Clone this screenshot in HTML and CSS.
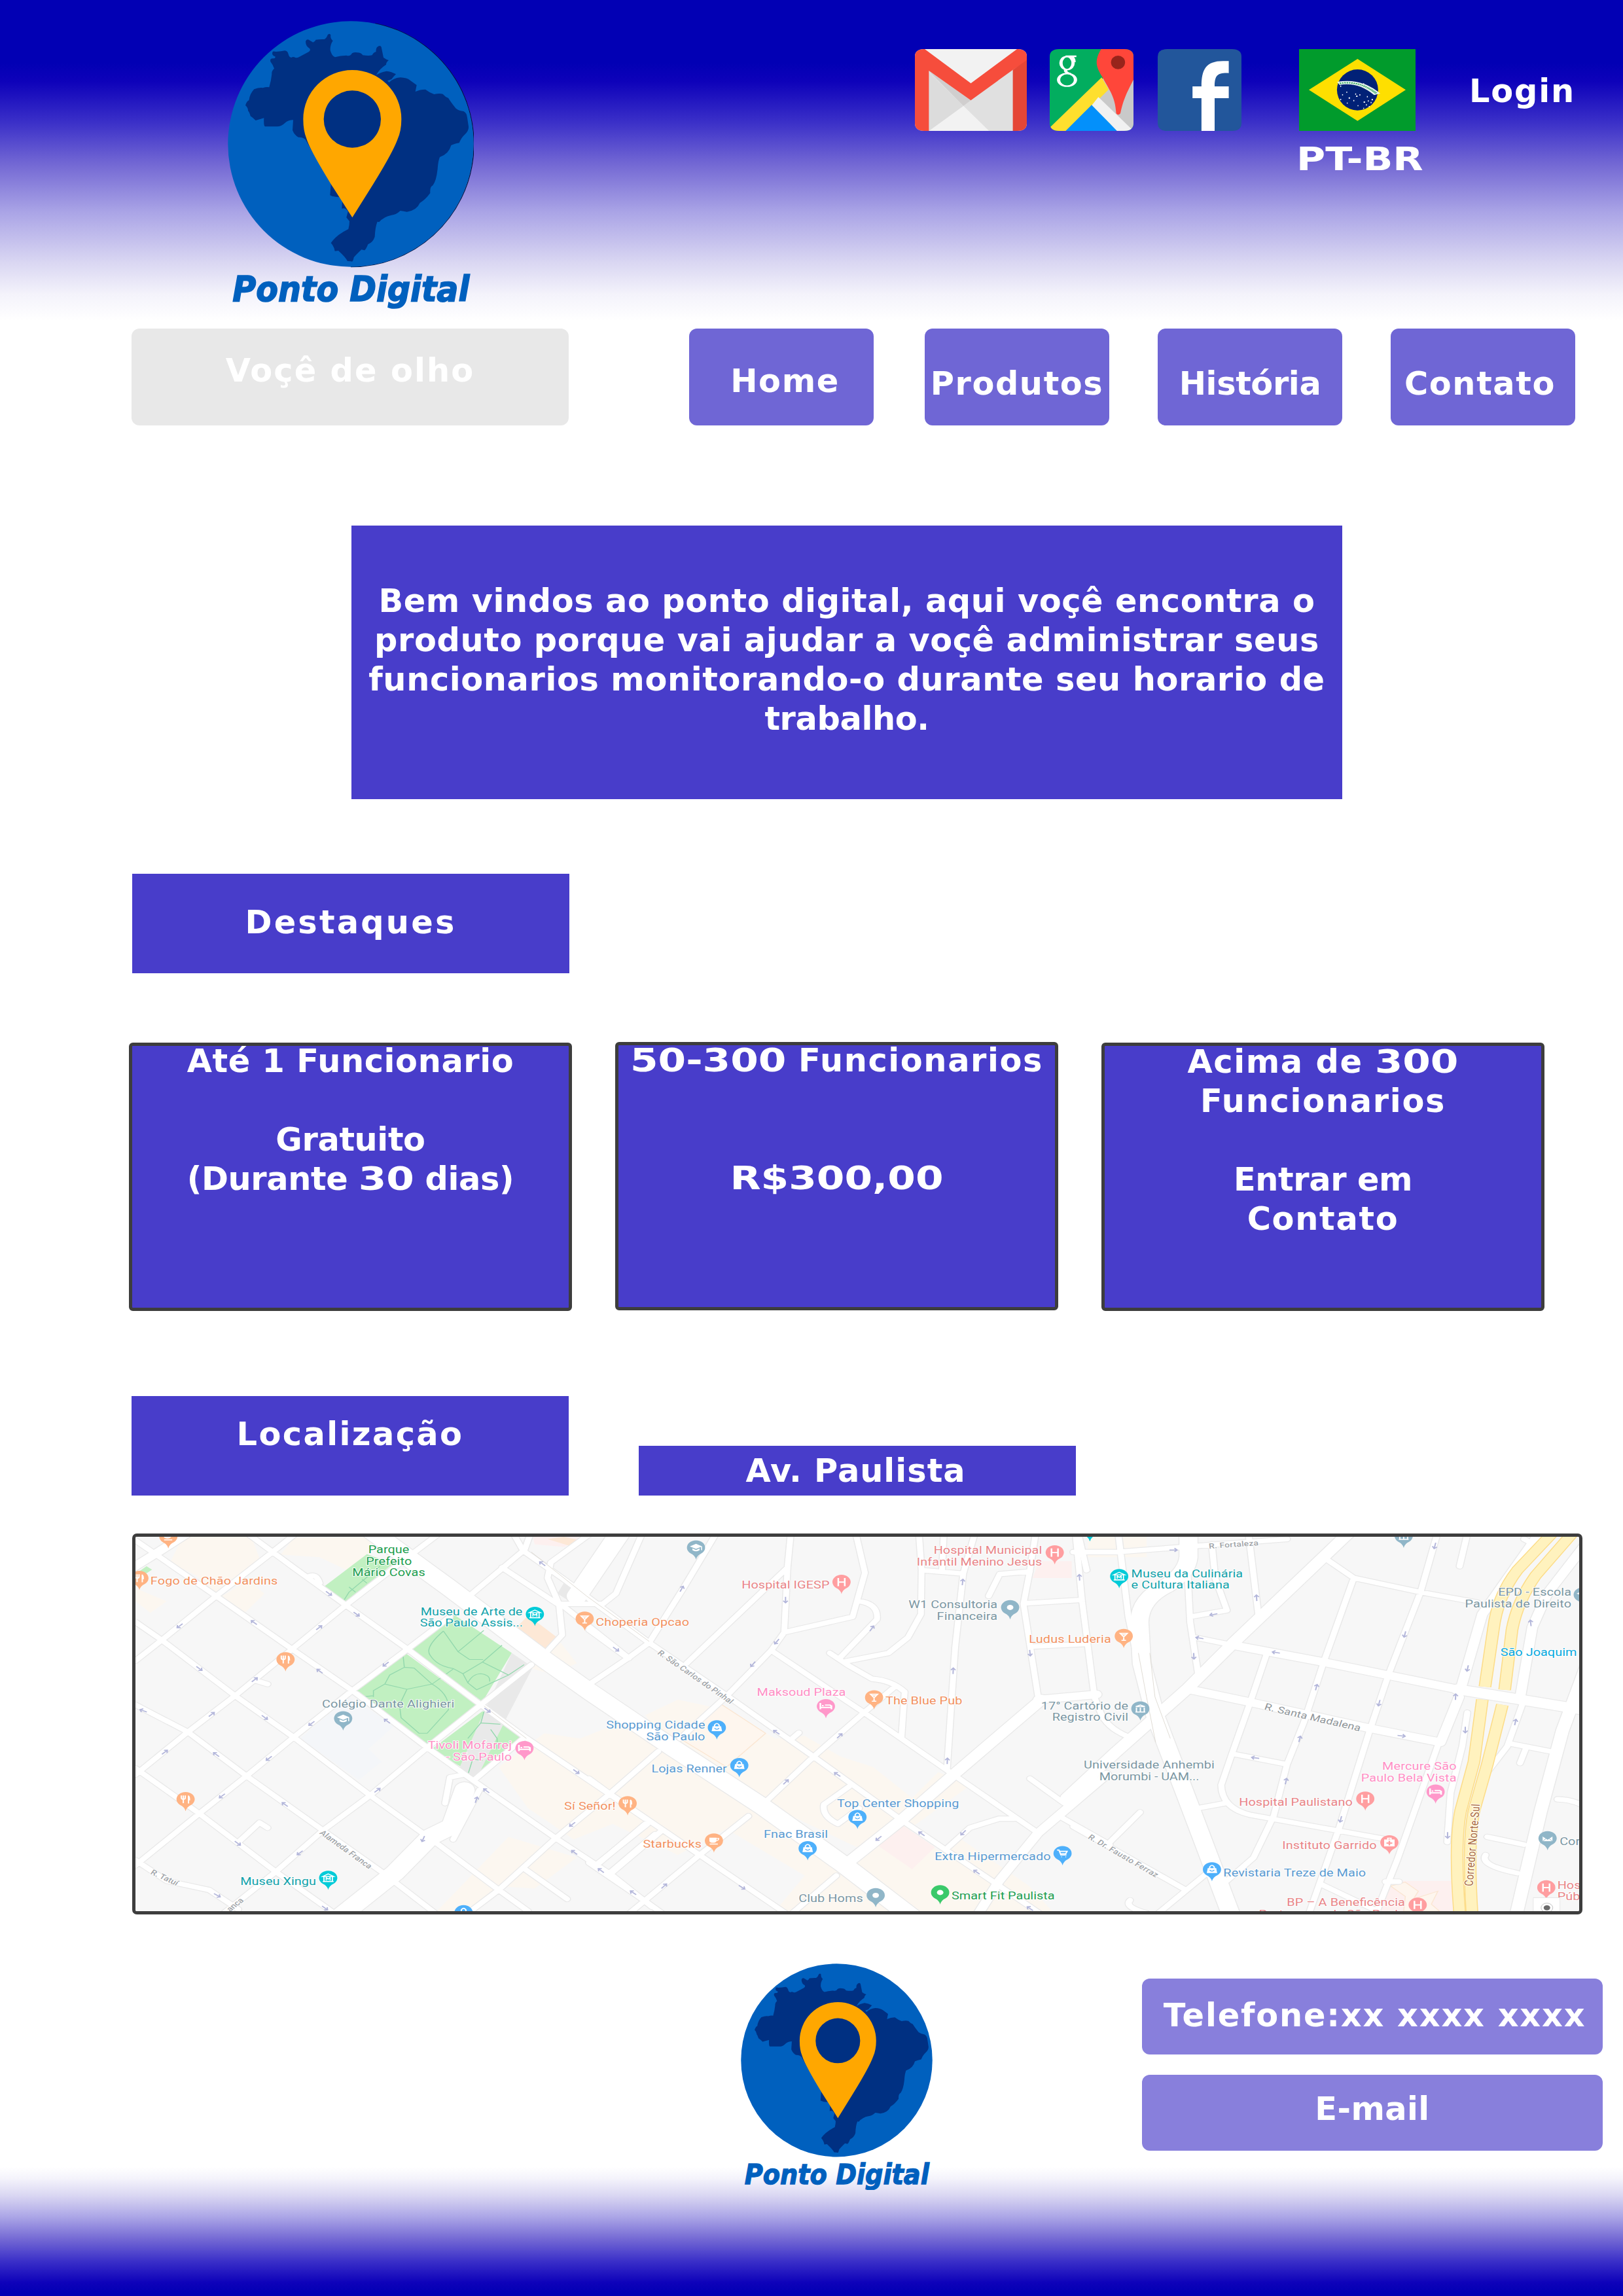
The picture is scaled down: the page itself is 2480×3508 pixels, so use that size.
FILE: index.html
```html
<!DOCTYPE html>
<html lang="pt-BR">
<head>
<meta charset="utf-8">
<title>Ponto Digital</title>
<link rel="stylesheet" href="styles.css">
</head>
<body>
<header class="top">
  <svg class="logo" viewBox="84 96 1128 1320" role="img" aria-label="Ponto Digital">
    <defs>
      <g id="emblem">
        <circle cx="648" cy="660" r="563" fill="#0060be"/>
        <path fill="#003082" d="M289 240Q290 233 305 237Q330 236 346 232Q358 233 362 248Q365 262 376 264Q383 258 394 264Q402 266 410 262L455 238Q466 230 459 222Q441 212 441 190Q445 178 455 182L475 194Q483 192 488 182Q510 179 527 180Q538 174 542 160Q550 150 556 160Q553 175 566 187Q553 205 554 230Q562 258 576 262Q600 255 628 254Q645 260 654 244Q665 238 678 241Q695 241 703 253Q730 257 746 253Q752 240 764 237Q762 225 768 217Q782 204 788 215L798 264Q810 273 822 276Q810 285 810 296Q780 315 764 344Q785 330 812 326Q835 328 855 340Q845 350 835 363Q826 367 816 370L824 378Q842 358 875 355Q905 356 920 368L950 390L944 420Q965 410 990 410Q1010 425 1030 432Q1055 426 1070 431Q1082 445 1095 449Q1108 470 1130 497Q1145 508 1165 510Q1180 517 1182 540L1188 580Q1190 600 1170 617Q1155 630 1145 655Q1120 660 1108 666Q1098 705 1056 720Q1048 740 1046 775Q1040 830 1024 850Q1010 855 1012 885Q990 915 965 930Q950 965 905 971Q890 968 875 966Q855 985 835 986Q800 992 778 1018L770 1016Q760 1040 758 1085Q750 1110 727 1120Q715 1150 709 1147L697 1144Q670 1170 662 1180Q658 1203 650 1198Q640 1196 633 1197Q625 1180 591 1149L575 1151Q572 1130 557 1114Q580 1078 637 1050Q642 1030 642 1014L628 997L635 970Q625 950 607 956L609 920L595 904Q570 904 553 895L557 842L440 640Q430 628 408 629Q390 620 381 597L384 550Q360 550 345 565Q330 580 310 580H255Q248 578 250 541L212 552Q200 540 188 532Q184 515 177 508Q178 495 165 483Q170 465 181 460Q185 430 205 409Q230 400 245 403Q262 397 274 400Q283 370 286 340Q284 325 297 314Q290 295 280 283Q276 268 290 268Q305 268 301 259Q285 253 289 240Z"/>
        <path fill="#ffa700" fill-rule="evenodd" d="M655 997L556 842Q460 685 445 635Q430 600 430 546A225 225 0 0 1 880 546Q880 600 862 640Q840 700 750 845ZM655 415A131 131 0 1 0 655 677A131 131 0 1 0 655 415Z"/>
        <text class="wordmark" x="106" y="1380" textLength="1086" lengthAdjust="spacingAndGlyphs">Ponto Digital</text>
      </g>
    </defs>
    <path d="M760 108A563 563 0 0 1 648 1223" fill="none" stroke="#04123c" stroke-width="4"/>
    <use href="#emblem"/>
  </svg>

  <nav class="social">
    <svg class="mail" viewBox="53 105 240 375" preserveAspectRatio="none" aria-label="Gmail">
      <defs><clipPath id="cm"><path d="M53 140Q53 105 73 105H273Q293 105 293 140V445Q293 480 273 480H73Q53 480 53 445Z"/></clipPath></defs>
      <g clip-path="url(#cm)">
        <path fill="#e0e0e0" d="M53 105H293V480H53Z"/>
        <path fill="#f2f2f2" d="M70 105H276L173 262ZM157 365L212 480H83Z"/>
        <path fill="#d0cece" d="M83 205L173 340L157 365Z"/>
        <path fill="#dcdcdc" d="M83 215L157 365L83 480Z"/>
        <path fill="#f64d3c" d="M53 105H74L173 262L272 105H293V160L263 200L173 340L83 204V480H53Z"/>
        <path fill="#e54636" d="M293 155V480H263V200Z"/>
      </g>
    </svg>
    <svg class="tile" viewBox="342 105 179 375" preserveAspectRatio="none" aria-label="Google Maps">
      <defs><clipPath id="cg"><path d="M342 140Q342 105 362 105H501Q521 105 521 140V445Q521 480 501 480H362Q342 480 342 445Z"/></clipPath></defs>
      <g clip-path="url(#cg)">
        <path fill="#02ad5f" d="M342 105H521V480H342Z"/>
        <path fill="#c9c9c9" d="M455 240L521 200V480H480L440 320Z"/>
        <path fill="#fedf2e" d="M453 235L468 290L378 480H342V465Z"/>
        <path fill="#0390fb" d="M432 360L486 480H376Z"/>
        <path fill="#f1f1f1" d="M446 325L520 478L486 480L432 362Z"/>
        <path fill="#ff463a" d="M452 105H521V245C508 300 500 330 493 400Q488 412 484 400C482 320 468 290 455 235C442 190 436 160 452 105Z"/>
        <ellipse cx="488" cy="166" rx="15" ry="31" fill="#98241b"/>
        <g fill="none" stroke="#fff" stroke-width="7"><ellipse cx="379" cy="169" rx="13" ry="30"/><ellipse cx="379" cy="246" rx="18" ry="29"/><path d="M376 138H399M376 199Q374 212 386 218M390 142Q394 150 394 165"/></g>
      </g>
    </svg>
    <svg class="tile" viewBox="573 105 178 375" preserveAspectRatio="none" aria-label="Facebook">
      <path fill="#22569b" d="M573 140Q573 105 593 105H731Q751 105 751 140V445Q751 480 731 480H593Q573 480 573 445Z"/>
      <path fill="#fff" d="M666 480V330H647V276H666C666 200 675 160 712 160H724V215C700 213 694 225 694 276H724V330H694V480Z"/>
    </svg>
  </nav>

  <div class="lang">
    <svg class="flag" viewBox="875 105 249 375" preserveAspectRatio="none" aria-label="Brasil">
      <path fill="#019b2c" d="M875 105H1124V480H875Z"/>
      <path fill="#fedf00" d="M1000 150L1103 292L1000 434L896 292Z"/>
      <ellipse cx="1000" cy="292" rx="44" ry="94" fill="#012177"/>
      <path d="M959 262Q1005 245 1042 312" fill="none" stroke="#e9f5ef" stroke-width="15"/>
      <path d="M962 262Q1005 248 1040 308" fill="none" stroke="#2fa35b" stroke-width="6" stroke-dasharray="3 2"/>
      <g fill="#fff"><path d="M1012 262h2v5h-2zM963 272h2v6h-2zM976 300h2v5h-2zM967 312h2v5h-2zM963 333h2v6h-2zM981 326h3v6h-3zM977 350h2v5h-2zM991 338h2v6h-2zM995 308h2v6h-2zM997 318h3v6h-3zM1004 312h2v6h-2zM1000 362h2v5h-2zM1013 345h3v6h-3zM1020 320h2v6h-2zM1022 340h2v6h-2zM1030 334h3v6h-3zM1028 347h2v6h-2zM1018 358h2v6h-2zM1012 374h2v5h-2zM1024 366h2v5h-2z"/></g>
    </svg>
    <span class="lang-code">PT-BR</span>
  </div>
  <a class="login">Login</a>
</header>

<nav class="menu">
  <div class="search">Voçê de olho</div>
  <a class="tab tab-home">Home</a>
  <a class="tab">Produtos</a>
  <a class="tab tight">História</a>
  <a class="tab tab-contact">Contato</a>
</nav>

<section class="hero">
  <p>Bem vindos ao ponto digital, aqui voçê encontra o<br>produto porque vai ajudar a voçê administrar seus<br>funcionarios monitorando-o durante seu horario de<br><span class="tight">trabalho.</span></p>
</section>

<h2 class="label label-highlights">Destaques</h2>

<section class="plans">
  <article class="plan"><p>Até 1 Funcionario</p><p class="gap tight">Gratuito</p><p class="tight">(Durante <span class="num num-2">30</span> dias)</p></article>
  <article class="plan plan-mid"><p><span class="num num-6">50-300</span> Funcionarios</p><p class="gap2"><span class="num">R$300,00</span></p></article>
  <article class="plan plan-last"><p>Acima de <span class="num num-3">300</span></p><p class="loose">Funcionarios</p><p class="gap tight">Entrar em</p><p class="loose">Contato</p></article>
</section>

<section class="place">
  <h2 class="label label-place">Localização</h2>
  <div class="address">Av. Paulista</div>
</section>

<svg class="map" viewBox="34 71 4435 1446" preserveAspectRatio="none" role="img" aria-label="Mapa da Av. Paulista">
  <defs>
    <path id="p" d="M0 46Q-3 30 -17 22A28 28 0 1 1 17 22Q3 30 0 46Z"/>
    <path id="fork" fill="none" stroke="#fff" stroke-width="4" d="M-13 -15V-6Q-13 0 -7 0Q-1 0 -1 -6V-15M-7 -15V15M9 -14V16M8 -13Q12 -12 12 2H9" />
    <path id="hosp" fill="none" stroke="#fff" stroke-width="5" d="M-10 -16V16M10 -16V16M-10 0H10"/>
    <path id="bed" fill="none" stroke="#fff" stroke-width="5" d="M-17 -13V11M17 -4V11M-17 4H17M-3 -5H13L17 0M-12 -3H-7"/>
    <g id="bag"><path fill="#fff" d="M-16 14L-13 -5H13L16 14Z"/><path d="M-7 -4V-10Q0 -22 7 -10V-4" fill="none" stroke="#fff" stroke-width="4"/><path d="M-7 2Q0 11 7 2" fill="none" stroke="#4aa8f5" stroke-width="3"/></g>
    <path id="mus" fill="none" stroke="#fff" stroke-width="3.5" d="M-17 -6L0 -16L17 -6ZM-13 -5V13H13V-5M-17 14H17M-6 9V-2L0 4L6 -2V9"/>
    <g id="cup"><path fill="#fff" d="M-14 -12H8V0Q7 8 -3 8Q-13 8 -14 0ZM-13 11H12V15H-13Z"/><path d="M8 -9H15Q15 -1 7 0" fill="none" stroke="#fff" stroke-width="3"/></g>
    <path id="glass" fill="none" stroke="#fff" stroke-width="4" d="M-11 -13H11L0 1ZM0 0V13M-7 14H7M-7 -8H7"/>
    <g id="cap"><path fill="#fff" d="M0 -15L19 -5L0 5L-19 -5ZM-11 3L0 9L11 3V10Q0 18 -11 10Z"/><path d="M17 -4V10" stroke="#fff" stroke-width="3"/></g>
    <circle id="dot" r="10" fill="#fff"/>
    <path id="cart" fill="none" stroke="#fff" stroke-width="4" d="M-17 -13H-11L-5 6H12M-9 -8H14L10 1H-6M-4 13h2M9 13h2"/>
    <path id="bank" fill="none" stroke="#fff" stroke-width="4" d="M-14 -8L0 -14L14 -8ZM-12 -4V12M0 -4V12M12 -4V12M-15 13H15"/>
    <path id="arrow" fill="none" stroke="#b3b6da" stroke-width="4" d="M-12 0H10M3 -7L11 0L3 7"/>

    <g id="r-a">
      <path d="M34 85L282 300L515 505L700 665L930 885L1080 1020L1325 1235L1500 1380L1620 1500M34 400L115 470L340 685L520 845L755 1070L965 1260L1150 1435L1240 1517M34 720L195 825L375 995L610 1205L790 1365L960 1530M34 965L230 1140L465 1365L650 1530M380 60L520 190L680 335L870 505L1095 720L1225 840L1490 1065L1600 1160M34 550L115 470L282 300L455 130L525 60M34 990L195 825L340 685L515 505L680 335L860 160L965 60M34 1340L230 1140L375 995L520 845L700 665L870 505L1000 380M300 1530L465 1365L610 1205L755 1070L930 885L1095 720L1250 565M1075 1010L1225 850M1050 1530L1150 1435L1325 1235L1490 1065L1640 900M1050 310L1230 120L1247 60M1290 525L1345 450L1335 330L1300 230L1310 170L1430 60M1200 70L1225 125L1350 235L1612 480M1350 340L1550 540M1160 190L1330 330L1470 330L1510 290L1590 60M34 1320L130 1400L260 1435L350 1510M355 1245L415 1175L440 1195M565 225Q590 210 600 250M400 625L440 640M985 1100L1000 1000L1040 990M1090 1050L1010 1240M1225 1350L1360 1470M1450 1340L1600 1180M1490 1370L1630 1220"/>
      <path class="w30" d="M20 195L110 125L190 60"/>
      <path class="w70" d="M640 1560L830 1370L940 1230L1005 1190L1045 1050"/>
      <path class="w70" d="M1390 300L1520 60"/>
    </g>
    <path id="r-main" class="w70" d="M760 50L1000 270L1290 545L1430 670L1677 880L1957 1110L2207 1335L2420 1540"/>
    <g id="r-b">
      <path d="M0 310L185 480L430 690L690 920L960 1165L1250 1410L1390 1530M0 430L120 540M560 510L845 750L1120 990L1380 1215M0 1005L60 1060L340 1300L610 1530M0 1330L175 1480L230 1530M-10 650L120 540L185 480L290 270L390 60M280 850L420 690L560 510L600 440L610 190L620 60M300 560L610 190M600 440L810 380L848 210L820 60M830 320Q890 330 885 390L770 540M740 520L800 570L870 620Q930 625 970 670L960 850M790 552L920 520L980 460L1020 370L1022 200L1014 60M1022 200L1150 213M1090 60L1085 200M1185 60L1150 213L1125 500L1100 970M530 1110L690 920L845 750L940 650M620 1530L760 1380M120 1530L340 1300L490 1150M20 1340L180 1180M65 1375L220 1210M1372 60L1355 200L1335 330L1380 690M1355 205L1262 215L1228 300M1340 328L1510 315M1360 495L1530 485M1495 60L1515 320L1552 680M800 1035L722 1105Q715 1150 765 1180L830 1120M1095 1280L1170 1195L1260 1160H1305M1355 1005L1460 1100M1445 1150L1600 1260M620 855L645 828"/>
      <path class="w42" d="M780 1345L960 1165L1120 990L1390 700"/>
      <path class="w30" d="M1380 700L1560 680M1190 1540L1260 1400L1380 1215L1590 990"/>
    </g>
    <g id="r-c">
      <path d="M0 130H130L640 80M135 60L165 380L185 500M15 60L40 200M340 150L350 400L375 610M415 100L425 230L460 355L350 380M525 60L555 380M365 460L480 490M755 155L840 230L1040 285L1210 325M1090 60L1040 285L945 600L885 830L795 1200L705 1530M840 230L750 555L690 790L640 950L600 1150L540 1310L460 1400M580 520L530 710L475 910L443 1030Q445 1120 530 1145L940 1240M480 910L640 950M370 1120L455 1100M1095 865L970 1320L905 1530M1180 750L1165 880L1130 1060L1120 1250M1350 700L1300 880L1240 980M1310 870L1430 900M1355 890L1338 945M1240 1230L1350 1260M1235 1300Q1215 1340 1330 1370M1450 1085Q1490 1085 1530 1110M200 1135L110 1250M0 1190L330 1430M410 1360L250 1530M170 1475Q150 1500 220 1525M745 1415L900 1510M935 1403H975M1350 80L1380 100M1180 60L1157 185M-10 690L60 680L85 760Q110 820 180 850"/>
      <path class="w30" d="M480 490L750 555L940 605L1150 660M345 660L530 710L885 810L1100 865L1155 690M1395 60L1225 370L1160 660M1540 90L1420 290L1375 420L1340 680"/>
      <path class="w42" d="M830 50L480 480L340 660L130 900L-20 1080M1150 660L1530 740M1540 560L1465 820L1400 1130L1325 1540"/>
      <path class="w55" d="M345 50V150Q340 210 280 260Q200 310 198 400L205 560L245 760L340 1080L475 1540"/>
    </g>
  </defs>

  <path fill="#f7f7f7" d="M24 60H4479V1527H24Z"/>
  <g class="block">
    <path d="M180 71H390L420 170L280 290L220 220L140 170ZM520 75L790 71L700 210L600 150L480 140ZM300 300L380 240L430 290L370 365ZM34 270L130 320L80 365L34 320Z"/>
    <path d="M1400 850L1520 790L1950 1110L2200 1330L2400 1530H1990L2090 1380L1850 1200L1700 1300L1500 1180L1380 1240L1300 1170L1240 1120L1150 960L1290 830ZM1180 1230L1390 1310L1260 1430L1150 1420L1060 1517H960L1050 1400Z"/>
    <path d="M1600 760L1700 700L1850 740L2000 850L2090 840L2200 920L2300 960L2420 1080L2500 980L2600 1030L2400 1210L2300 1300L1950 1090L1660 870ZM2230 1330L2380 1180L2520 1300L2560 1230L2780 1420L2850 1517H2440ZM1250 580L1310 600L1390 560L1340 480ZM2960 71H3140V150H2960Z"/>
  </g>
  <path fill="#f4f6f9" d="M540 850L690 690L830 800L750 890L790 940L720 1010Z"/>
  <path fill="#fdf0ef" d="M2810 165H2910V230H2790ZM1255 71H1420L1350 110L1260 100ZM2390 1185L2490 1270L2420 1355L2310 1260ZM3880 1430L3920 1400H4080V1517H3850Z"/>
  <path class="outline" d="M3890 1420L3935 1405L3975 1440L3960 1470L4035 1440L4015 1490L4040 1517H3930L3935 1460Z"/>
  <path fill="#fde8d6" d="M1190 440L1240 375L1330 460L1290 515ZM1300 80L1350 71L1400 85L1365 105Z"/>
  <path class="outline" d="M1700 845L1830 715L1970 830L1850 960Z"/>
  <g fill="#c1f0c1">
    <path d="M615 262L745 138L825 175L680 322ZM875 500L1010 370L1190 520L1100 708ZM705 670L858 515L1082 722L930 880ZM940 895L1100 745L1220 840L1080 990ZM45 205L68 185L85 198L60 218Z"/>
  </g>
  <path fill="#e9e9e9" d="M1190 520L1255 575L1170 780L1080 1010L1020 990L1100 760ZM1330 290L1350 250L1420 310L1380 330Z"/>
  <g fill="none" stroke="#93d8ad" stroke-width="3">
    <path d="M980 435L1025 515L1060 545L1102 545M1025 515L1104 433M980 435Q920 500 940 530Q960 570 1010 580L1040 600L1100 555L1160 490M1100 555L1180 605L1228 565M1180 605L1082 662L1055 635Q1070 600 1095 600Q1125 605 1122 630M1055 635L1040 600M855 518L860 575L815 605L800 640L868 660L945 640L1010 582M860 575L890 578L945 640Q1000 680 995 740L930 830H905L850 770L845 720L868 660M800 640L765 665V690M725 690L765 685M1105 745L1095 790L1155 795M1095 790L1075 820L1055 850M1125 815L1145 850V890M1055 990L1070 930L1100 935M675 315L690 285L785 185M690 265L710 285M730 235L745 250"/>
  </g>

  <g class="casing"><use href="#r-a"/><use href="#r-main"/><use href="#r-b" x="1427"/><use href="#r-c" transform="translate(2915 0) scale(1.0257 1)"/></g>
  <g class="road"><use href="#r-a"/><use href="#r-main"/><use href="#r-b" x="1427"/><use href="#r-c" transform="translate(2915 0) scale(1.0257 1)"/></g>
  <path d="M1250 130L1420 300L1612 475M1105 725L1235 850" fill="none" stroke="#dcd8d0" stroke-width="2"/>
  <path d="M3115 520L3140 690L3168 865M3150 520L3166 690L3213 850" fill="none" stroke="#dcd8d0" stroke-width="2"/>

  <g transform="translate(2915 0) scale(1.0257 1)">
    <g fill="none" stroke="#fcdc88" stroke-width="38"><path d="M1440 50L1330 200Q1270 300 1258 430L1233 650M1225 700L1200 940L1160 1130Q1140 1260 1158 1540"/><path d="M1500 50L1385 220Q1330 320 1314 430L1292 662M1285 720L1240 950L1200 1130Q1180 1260 1195 1540"/></g>
    <g fill="none" stroke="#fff2be" stroke-width="32"><path d="M1440 50L1330 200Q1270 300 1258 430L1233 650M1225 700L1200 940L1160 1130Q1140 1260 1158 1540"/><path d="M1500 50L1385 220Q1330 320 1314 430L1292 662M1285 720L1240 950L1200 1130Q1180 1260 1195 1540"/></g>
  </g>

  <g>
    <use href="#arrow" transform="translate(170 415) rotate(137)"/><use href="#arrow" transform="translate(398 402) rotate(222)"/><use href="#arrow" transform="translate(598 422) rotate(-43)"/><use href="#arrow" transform="translate(628 290) rotate(42)"/><use href="#arrow" transform="translate(713 370) rotate(42)"/><use href="#arrow" transform="translate(230 580) rotate(42)"/><use href="#arrow" transform="translate(400 623) rotate(-43)"/><use href="#arrow" transform="translate(600 590) rotate(222)"/><use href="#arrow" transform="translate(803 563) rotate(137)"/><use href="#arrow" transform="translate(58 743) rotate(205)"/><use href="#arrow" transform="translate(268 757) rotate(-43)"/><use href="#arrow" transform="translate(431 769) rotate(42)"/><use href="#arrow" transform="translate(575 792) rotate(137)"/><use href="#arrow" transform="translate(807 783) rotate(222)"/><use href="#arrow" transform="translate(124 903) rotate(-43)"/><use href="#arrow" transform="translate(282 912) rotate(222)"/><use href="#arrow" transform="translate(444 927) rotate(137)"/><use href="#arrow" transform="translate(300 1072) rotate(137)"/><use href="#arrow" transform="translate(493 1105) rotate(222)"/><use href="#arrow" transform="translate(777 1050) rotate(-43)"/><use href="#arrow" transform="translate(348 1255) rotate(42)"/><use href="#arrow" transform="translate(539 1292) rotate(137)"/><use href="#arrow" transform="translate(918 1238) rotate(110)"/><use href="#arrow" transform="translate(1081 1087) rotate(-75)"/><use href="#arrow" transform="translate(1112 1052) rotate(222)"/><use href="#arrow" transform="translate(1115 741) rotate(42)"/><use href="#arrow" transform="translate(1284 175) rotate(222)"/><use href="#arrow" transform="translate(1388 978) rotate(42)"/><use href="#arrow" transform="translate(1376 1182) rotate(137)"/><use href="#arrow" transform="translate(1382 1290) rotate(222)"/><use href="#arrow" transform="translate(1464 1360) rotate(222)"/><use href="#arrow" transform="translate(1510 505) rotate(42)"/><use href="#arrow" transform="translate(285 1456) rotate(35)"/><use href="#arrow" transform="translate(616 1505) rotate(42)"/>
    <g transform="translate(1427 0)"><use href="#arrow" transform="translate(285 272) rotate(-65)"/><use href="#arrow" transform="translate(604 315) rotate(90)"/><use href="#arrow" transform="translate(577 476) rotate(125)"/><use href="#arrow" transform="translate(504 563) rotate(125)"/><use href="#arrow" transform="translate(869 425) rotate(-60)"/><use href="#arrow" transform="translate(1148 246) rotate(-85)"/><use href="#arrow" transform="translate(1119 589) rotate(-88)"/><use href="#arrow" transform="translate(1101 937) rotate(-88)"/><use href="#arrow" transform="translate(1355 520) rotate(85)"/><use href="#arrow" transform="translate(1507 228) rotate(-93)"/><use href="#arrow" transform="translate(576 826) rotate(220)"/><use href="#arrow" transform="translate(770 840) rotate(-50)"/><use href="#arrow" transform="translate(763 989) rotate(220)"/><use href="#arrow" transform="translate(605 1018) rotate(-50)"/><use href="#arrow" transform="translate(890 1236) rotate(135)"/><use href="#arrow" transform="translate(1022 1218) rotate(220)"/><use href="#arrow" transform="translate(1150 1214) rotate(130)"/><use href="#arrow" transform="translate(1191 1366) rotate(220)"/><use href="#arrow" transform="translate(231 1420) rotate(-48)"/><use href="#arrow" transform="translate(136 1446) rotate(220)"/><use href="#arrow" transform="translate(470 1425) rotate(38)"/><use href="#arrow" transform="translate(1355 1507) rotate(220)"/></g>
    <g transform="translate(2915 0) scale(1.0257 1)"><use href="#arrow" transform="translate(300 122)"/><use href="#arrow" transform="translate(549 307) rotate(-93)"/><use href="#arrow" transform="translate(420 371) rotate(165)"/><use href="#arrow" transform="translate(378 462) rotate(192)"/><use href="#arrow" transform="translate(607 518) rotate(192)"/><use href="#arrow" transform="translate(361 532) rotate(88)"/><use href="#arrow" transform="translate(1083 106) rotate(102)"/><use href="#arrow" transform="translate(993 448) rotate(102)"/><use href="#arrow" transform="translate(728 652) rotate(-78)"/><use href="#arrow" transform="translate(916 713) rotate(102)"/><use href="#arrow" transform="translate(678 852) rotate(-78)"/><use href="#arrow" transform="translate(983 840) rotate(8)"/><use href="#arrow" transform="translate(545 925) rotate(190)"/><use href="#arrow" transform="translate(637 1015) rotate(-80)"/><use href="#arrow" transform="translate(801 1162) rotate(102)"/><use href="#arrow" transform="translate(1121 1224) rotate(90)"/><use href="#arrow" transform="translate(1174 817) rotate(90)"/><use href="#arrow" transform="translate(1145 689) rotate(-88)"/><use href="#arrow" transform="translate(1181 579) rotate(100)"/><use href="#arrow" transform="translate(1370 404) rotate(-95)"/><use href="#arrow" transform="translate(1324 787) rotate(-80)"/></g>
  </g>

  <g fill="#ffb383"><use href="#p" x="135" y="70"/><use href="#p" x="46" y="231"/><use href="#p" x="495" y="545"/><use href="#p" x="188" y="1085"/><use href="#p" x="1414" y="388"/><use href="#p" x="1546" y="1101"/><use href="#p" x="2303" y="692"/><use href="#p" x="1811" y="1245"/><use href="#p" x="3070" y="455"/></g>
  <g fill="#00cbd8"><use href="#p" x="1261" y="370"/><use href="#p" x="626" y="1389"/><use href="#p" x="3056" y="224"/><use href="#p" x="2966" y="43"/></g>
  <g fill="#90b6c8"><use href="#p" x="672" y="773"/><use href="#p" x="1756" y="113"/><use href="#p" x="2721" y="344"/><use href="#p" x="2308" y="1456"/><use href="#p" x="3121" y="735"/><use href="#p" x="3930" y="68"/><use href="#p" x="4480" y="295"/><use href="#p" x="4372" y="1236"/></g>
  <g fill="#ff98ca"><use href="#p" x="1229" y="888"/><use href="#p" x="2155" y="726"/><use href="#p" x="4028" y="1056"/></g>
  <g fill="#4eb0fb"><use href="#p" x="1820" y="808"/><use href="#p" x="1889" y="954"/><use href="#p" x="2252" y="1154"/><use href="#p" x="2099" y="1275"/><use href="#p" x="2882" y="1294"/><use href="#p" x="3341" y="1356"/><use href="#p" x="1042" y="1522"/></g>
  <g fill="#ff9ea0"><use href="#p" x="2203" y="246"/><use href="#p" x="2858" y="132"/><use href="#p" x="3812" y="1083"/><use href="#p" x="3886" y="1252"/><use href="#p" x="3973" y="1493"/><use href="#p" x="4368" y="1426"/></g>
  <use href="#p" x="2506" y="1445" fill="#3ac96a"/>
  <use href="#cup" x="135" y="70"/><use href="#fork" x="46" y="231"/><use href="#fork" x="495" y="545"/><use href="#fork" x="188" y="1085"/><use href="#fork" x="1546" y="1101"/><use href="#glass" x="1414" y="390"/><use href="#glass" x="2303" y="692"/><use href="#glass" x="3070" y="457"/><use href="#cup" x="1811" y="1245"/>
  <use href="#mus" x="1261" y="370"/><use href="#mus" x="626" y="1389"/><use href="#mus" x="3056" y="224"/><use href="#cap" x="672" y="773"/><use href="#cap" x="1756" y="113"/><use href="#dot" x="2721" y="344"/><use href="#dot" x="2308" y="1456"/><use href="#dot" x="2506" y="1445"/><use href="#bank" x="3121" y="735"/><use href="#bank" x="3930" y="68"/><use href="#cap" x="4480" y="295"/>
  <use href="#bed" x="1229" y="888"/><use href="#bed" x="2155" y="726"/><use href="#bed" x="4028" y="1056"/><use href="#bag" x="1820" y="808"/><use href="#bag" x="1889" y="954"/><use href="#bag" x="2252" y="1154"/><use href="#bag" x="2099" y="1275"/><use href="#bag" x="3341" y="1356"/><use href="#bag" x="1042" y="1522"/><use href="#cart" x="2882" y="1294"/>
  <use href="#hosp" x="2203" y="246"/><use href="#hosp" x="2858" y="132"/><use href="#hosp" x="3812" y="1083"/><use href="#hosp" x="3973" y="1493"/><use href="#hosp" x="4368" y="1426"/>
  <path fill="#fff" d="M3870 1240H3902V1267H3870ZM3879 1240V1233H3893V1240H3889V1237H3883V1240Z"/><path d="M3886 1245V1263M3877 1254H3895" stroke="#ff9ea0" stroke-width="5"/>
  <path d="M4356 1227H4388V1248H4356ZM4356 1227L4372 1240L4388 1227M4356 1248L4367 1237M4388 1248L4377 1237" fill="#fff" stroke="#90b6c8" stroke-width="2"/>

  <g class="poi">
    <g fill="#f2915f"><text x="80" y="256" textLength="391">Fogo de Chão Jardins</text><text x="1448" y="414" textLength="287">Choperia Opcao</text><text x="1351" y="1126" textLength="158">Sí Señor!</text><text x="1593" y="1271" textLength="180">Starbucks</text><text x="2338" y="718" textLength="236">The Blue Pub</text><text x="2779" y="481" textLength="252">Ludus Luderia</text></g>
    <g fill="#1e9e50"><text x="749" y="135" textLength="126">Parque</text><text x="742" y="179" textLength="141">Prefeito</text><text x="700" y="223" textLength="224">Mário Covas</text><text x="2541" y="1471" textLength="317">Smart Fit Paulista</text></g>
    <g fill="#12a2ab"><text x="910" y="374" textLength="313">Museu de Arte de</text><text x="908" y="418" textLength="316">São Paulo Assis...</text><text x="356" y="1415" textLength="233">Museu Xingu</text><text x="3093" y="228" textLength="343">Museu da Culinária</text><text x="3093" y="272" textLength="302">e Cultura Italiana</text></g>
    <g fill="#7b97a3"><text x="607" y="732" textLength="407">Colégio Dante Alighieri</text><text x="2409" y="347" textLength="273">W1 Consultoria</text><text x="2496" y="392" textLength="186">Financeira</text><text x="2071" y="1482" textLength="198">Club Homs</text><text x="2816" y="738" textLength="268">17° Cartório de</text><text x="2850" y="782" textLength="234">Registro Civil</text><text x="2947" y="967" textLength="402">Universidade Anhembi</text><text x="2995" y="1011" textLength="307">Morumbi - UAM...</text><text x="4220" y="299" textLength="225">EPD - Escola</text><text x="4118" y="343" textLength="327">Paulista de Direito</text><text x="4409" y="1262">Cor</text></g>
    <g fill="#ff8fc5"><text x="932" y="891" textLength="258">Tivoli Mofarrej</text><text x="988" y="936" textLength="202">- São Paulo</text><text x="1943" y="685" textLength="273">Maksoud Plaza</text><text x="3864" y="971" textLength="228">Mercure São</text><text x="3799" y="1016" textLength="293">Paulo Bela Vista</text></g>
    <g fill="#5a9bd2"><text x="1480" y="812" textLength="304">Shopping Cidade</text><text x="1603" y="856" textLength="181">São Paulo</text><text x="1619" y="980" textLength="232">Lojas Renner</text><text x="2189" y="1114" textLength="375">Top Center Shopping</text><text x="1964" y="1234" textLength="197">Fnac Brasil</text><text x="2489" y="1320" textLength="357">Extra Hipermercado</text><text x="3376" y="1383" textLength="438">Revistaria Treze de Maio</text></g>
    <g fill="#e98588"><text x="1896" y="272" textLength="270">Hospital IGESP</text><text x="2486" y="137" textLength="333">Hospital Municipal</text><text x="2434" y="181" textLength="385">Infantil Menino Jesus</text><text x="3424" y="1109" textLength="349">Hospital Paulistano</text><text x="3557" y="1278" textLength="290">Instituto Garrido</text><text x="3571" y="1498" textLength="363">BP – A Beneficência</text><text x="3485" y="1542" textLength="450">Portuguesa de São Paulo</text><text x="4402" y="1430">Hos</text><text x="4402" y="1473">Púb</text></g>
    <text x="4227" y="532" textLength="235" fill="#07a9df">São Joaquim</text>
    <g class="street">
      <text transform="translate(78 1372) rotate(30)">R. Tatuí</text>
      <text transform="translate(598 1217) rotate(42)" textLength="206">Alameda Franca</text>
      <text transform="translate(325 1520) rotate(-45)">anca</text>
      <text transform="translate(1636 522) rotate(41)" textLength="298">R. São Carlos do Pinhal</text>
      <text transform="translate(3332 117) rotate(-5)" textLength="153">R. Fortaleza</text>
      <text transform="translate(2958 1235) rotate(36)" textLength="260">R. Dr. Fausto Ferraz</text>
      <text class="big" transform="translate(3500 738) rotate(16)" textLength="306">R. Santa Madalena</text>
      <text class="brown" transform="translate(4142 1421) rotate(-86)" textLength="318">Corredor Norte-Sul</text>
    </g>
  </g>
  <path fill="#fff" stroke="#e4e4e4" stroke-width="2" d="M4328 1465H4410V1530H4328Z"/>
  <circle cx="4370" cy="1504" r="10" fill="#6b6b6b"/><circle cx="4370" cy="1504" r="18" fill="none" stroke="#bbb" stroke-width="2"/>
</svg>

<footer class="bottom">
  <svg class="logo-small" viewBox="84 96 1128 1320" preserveAspectRatio="none" role="img" aria-label="Ponto Digital"><use href="#emblem"/></svg>
  <div class="contacts">
    <div class="contact">Telefone:xx xxxx xxxx</div>
    <div class="contact contact-mail">E-mail</div>
  </div>
</footer>
</body>
</html>
```
FILE: styles.css
```css
* { box-sizing: border-box; margin: 0; padding: 0; }

body {
  width: 2480px;
  height: 3508px;
  overflow: hidden;
  background: #fff;
  color: #fff;
  font: 700 49.4px/60px "DejaVu Sans", Verdana, sans-serif;
  letter-spacing: 1.6px;
}

svg { display: block; }
p, h2, a, .search, .address, .contact { font-size: inherit; font-weight: 700; white-space: nowrap; }

.tight { letter-spacing: -0.4px; }
.loose { letter-spacing: 1.7px; }

/* Extended figures; the side margins make room for the stretch */
.num { display: inline-block; letter-spacing: 0; transform: scaleX(1.24); }
.num-2 { margin: 0 8px; }
.num-3 { margin: 0 12px; }
.num-6 { margin: 0 23px; }

/* Header */
.top {
  display: flex;
  align-items: flex-start;
  height: 502px;
  padding-left: 348px;
  background: linear-gradient(#0200b4 0, #0200b4 96px, #0e02ba 125px, #3a2fc8 186px, #7469d4 252px, #aaa4e6 324px, #d9d6f2 400px, #f4f3fb 450px, #fff 490px);
}
.logo { width: 376px; height: 440px; margin-top: 32px; }
.wordmark { font: italic 700 160px "DejaVu Sans", sans-serif; fill: #0060be; stroke: #0060be; stroke-width: 5; letter-spacing: 0; }
.social { display: flex; margin: 75px 0 0 674px; }
.mail { width: 171px; height: 125px; margin-right: 35px; }
.tile { width: 128px; height: 125px; margin-right: 37px; }
.lang { display: flex; flex-direction: column; width: 190px; margin: 75px 0 0 51px; }
.flag { width: 178px; height: 125px; }
.lang-code { margin: 13px 0 0 -4px; letter-spacing: 0; white-space: nowrap; transform: scaleX(1.22); transform-origin: left; }
.login { margin: 109px 0 0 70px; letter-spacing: 1.8px; }

/* Menu */
.menu { display: flex; height: 148px; padding-left: 201px; text-align: center; }
.search { width: 668px; margin-right: 184px; padding-top: 34px; border-radius: 12px; background: #e8e8e8; letter-spacing: 2.1px; }
.tab { width: 282px; margin-right: 74px; padding-top: 54px; border-radius: 12px; background: #6f66d5; }
.tab-home { margin-right: 78px; padding: 50px 0 0 11px; }
.tab-contact { margin-right: 0; padding-right: 9px; }

/* Welcome message */
.hero { width: 1514px; height: 418px; margin: 153px 0 0 537px; padding-top: 85px; background: #483dca; text-align: center; letter-spacing: 0.6px; }

/* Section labels */
.label { width: 668px; background: #483dca; text-align: center; }
.label-highlights { height: 152px; margin: 114px 0 0 202px; padding-top: 44px; letter-spacing: 3.2px; }

/* Plans */
.plans { display: flex; gap: 66px; margin: 105px 0 0 197px; text-align: center; letter-spacing: 0.6px; }
.plan { width: 677px; height: 410px; margin-top: 1px; border: 5px solid #3d3d3d; border-radius: 6px; background: #483dca; }
.plan p:first-child { margin-top: -7px; }
.plan-mid { margin-top: 0; }
.plan-mid p:first-child { letter-spacing: 1.6px; }
.plan-last p:first-child { margin-top: -6px; letter-spacing: 1.6px; }
.gap { margin-top: 60px; }
.gap2 { margin-top: 120px; }

/* Location */
.place { display: flex; align-items: flex-end; gap: 107px; margin: 130px 0 0 201px; }
.label-place { height: 152px; padding-top: 28px; letter-spacing: 2.4px; }
.address { width: 668px; height: 76px; padding: 8px 5px 0 0; background: #483dca; text-align: center; letter-spacing: 1px; }

.map { width: 2216px; height: 582px; margin: 58px 0 0 202px; border: 5px solid #3d3d3d; border-radius: 7px; background: #f7f7f7; }
.map text { font-family: Roboto, Arial, sans-serif; }
.block { fill: #fcf7f0; }
.outline { fill: #fef6ee; stroke: #fbe6d2; stroke-width: 3; }
.casing, .road { fill: none; stroke-linejoin: round; stroke-linecap: round; }
.casing { --edge: 6px; stroke: #e9e9e9; stroke-width: 24px; }
.road { --edge: 0px; stroke: #fff; stroke-width: 18px; }
.w30 { stroke-width: calc(30px + var(--edge)); }
.w42 { stroke-width: calc(38px + var(--edge)); }
.w55 { stroke-width: calc(54px + var(--edge)); }
.w70 { stroke-width: calc(62px + var(--edge)); }
.poi { font-size: 40px; font-weight: 400; letter-spacing: 0; stroke: #fff; stroke-opacity: .85; stroke-width: 5px; paint-order: stroke; stroke-linejoin: round; }
.street { font-size: 28px; font-weight: 500; fill: #a0a4a8; }
.street .big { font-size: 36px; font-weight: 400; fill: #8f9599; }
.street .brown { font-size: 36px; font-weight: 400; fill: #a8683c; }

/* Footer */
.bottom {
  display: flex;
  align-items: flex-start;
  height: 583px;
  padding: 75px 0 0 1132px;
  background: linear-gradient(#fff 0, #fff 386px, #f4f3fb 404px, #d9d6f2 430px, #aaa4e6 463px, #7469d4 496px, #3a2fc8 530px, #0e02ba 562px, #0200b4 578px);
}
.logo-small { width: 293px; height: 346px; }
.contacts { width: 704px; margin: 23px 0 0 320px; text-align: center; }
.contact { height: 116px; padding: 26px 0 0 7px; border-radius: 12px; background: #887fdc; letter-spacing: 1.8px; }
.contact-mail { margin-top: 31px; padding: 22px 0 0; letter-spacing: 0.4px; }
```
